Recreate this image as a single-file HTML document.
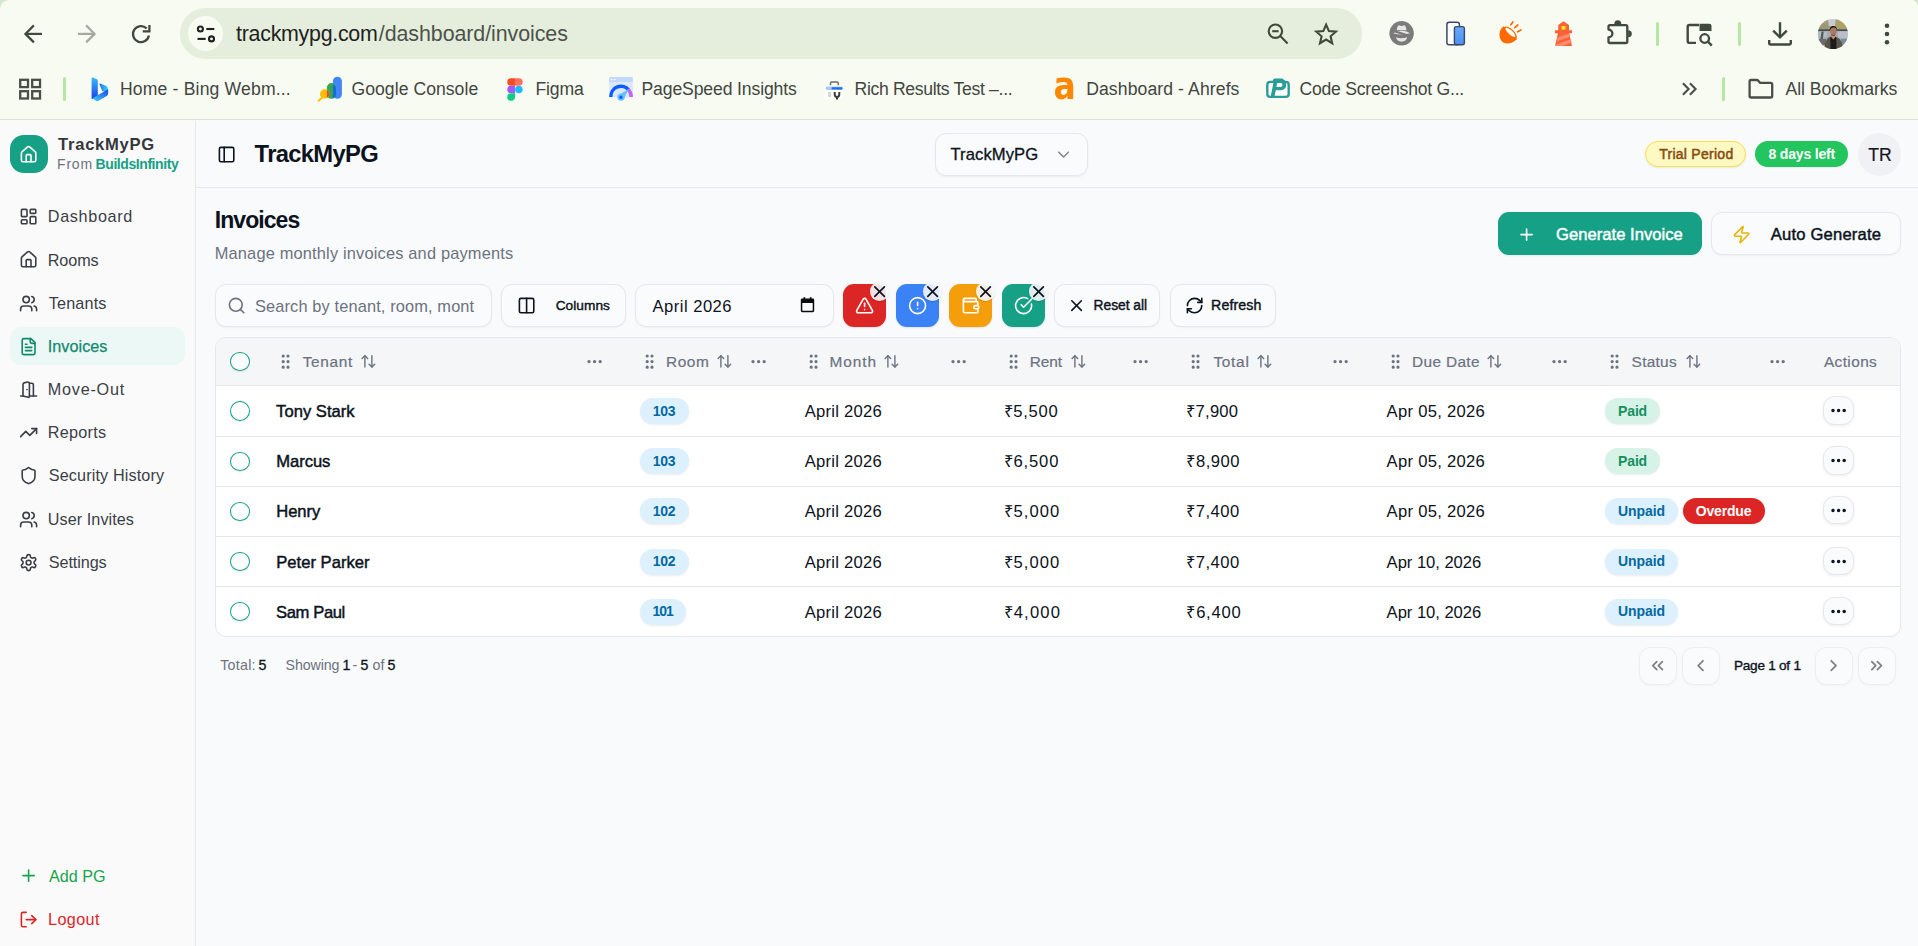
<!DOCTYPE html>
<html lang="en">
<head>
<meta charset="utf-8">
<title>Invoices - TrackMyPG</title>
<style>

*{box-sizing:border-box;margin:0;padding:0}
html,body{width:1918px;height:946px;overflow:hidden;background:#f9fafb}
body{font-family:"Liberation Sans",sans-serif}
#app{position:relative;width:1918px;height:946px;overflow:hidden;background:#f9fafb}
.b,.t,.i{position:absolute;display:block}
.t{white-space:nowrap}

</style>
</head>
<body>
<div id="app">
<!-- browser chrome -->
<div class="b" style="left:0px;top:0px;width:1918px;height:121px;background:#f8fbf2;"></div>
<div class="b" style="left:0px;top:119px;width:1918px;height:1px;background:#dee3d7;"></div>
<svg class="i" style="left:0px;top:0px" width="12" height="12" viewBox="0 0 12 12" ><path d="M0 0H8.500A9.500 9.500 0 0 0 0 9.500z" fill="#d6e7cd"/></svg>
<svg class="i" style="left:1906px;top:0px" width="12" height="12" viewBox="1906 0 12 12" ><path d="M1918 0H1911.500A7 7 0 0 1 1918 6.500z" fill="#d6e7cd"/></svg>
<svg class="i" style="left:20px;top:20px" width="28" height="28" viewBox="20 20 28 28" ><g fill="none" stroke="#3f4a3c" stroke-width="2.2"><path d="M42 33.9H26.2"/><path d="M33.9 25.4 25.400 33.900 33.900 42.400"/></g></svg>
<svg class="i" style="left:74px;top:20px" width="28" height="28" viewBox="74 20 28 28" ><g fill="none" stroke="#a4a9a1" stroke-width="2.2"><path d="M78 33.9H93.800"/><path d="M86.100 25.400 94.600 33.900 86.100 42.400"/></g></svg>
<svg class="i" style="left:128px;top:20px" width="28" height="28" viewBox="128 20 28 28" ><g fill="none" stroke="#3f4a3c" stroke-width="2.3"><path d="M146.7 28.500A8 8 0 1 0 148.900 35.500"/><path d="M149.400 24.900V31.400H142.700"/></g></svg>
<div class="b" style="left:180px;top:8px;width:1182px;height:50.5px;background:#e5eddc;border-radius:25.25px;"></div>
<div class="b" style="left:187.6px;top:15.7px;width:35.599999999999994px;height:35.599999999999994px;background:#f8fbf2;border-radius:18px;"></div>
<svg class="i" style="left:194px;top:22px" width="24" height="24" viewBox="194 22 24 24" ><g fill="none" stroke="#1f231e" stroke-width="2.1"><circle cx="200.400" cy="29" r="2.500"/><path d="M206.300 29h8"/><circle cx="211.500" cy="38.900" r="2.500"/><path d="M197.500 38.900h8.200"/></g></svg>
<span class="t" style="left:236.10px;top:21px;height:27px;line-height:27px;font-size:21.4px;color:#1f231e;letter-spacing:-0.275px;">trackmypg.com</span><span class="t" style="left:378.80px;top:21px;height:27px;line-height:27px;font-size:21.4px;color:#4c524a;letter-spacing:-0.065px;">/dashboard/invoices</span>
<svg class="i" style="left:1264px;top:20px" width="28" height="28" viewBox="1264 20 28 28" ><g fill="none" stroke="#3f4a3c" stroke-width="2.1"><circle cx="1275.400" cy="31.200" r="6.700"/><path d="M1280.300 36.100 1287.600 43.400"/><path d="M1272.200 31.200h6.400"/></g></svg>
<svg class="i" style="left:1312px;top:20px" width="28" height="28" viewBox="1312 20 28 28" ><path d="M1326.100 24.600 1328.900 31.100 1335.900 31.700 1330.600 36.300 1332.200 43.200 1326.100 39.500 1320 43.200 1321.600 36.300 1316.300 31.700 1323.300 31.100z" fill="none" stroke="#3f4a3c" stroke-width="2.1" stroke-linejoin="miter"/></svg>
<svg class="i" style="left:1388px;top:20px" width="28" height="28" viewBox="1388 20 28 28" ><circle cx="1401.600" cy="33.300" r="12.200" fill="#7b7b7b"/><g fill="#e6e6e6"><path d="M1396.700 30.200c.4-3.600 1.500-5 2.400-5 .8 0 1.500.8 2.500.8s1.700-.8 2.500-.8c.9 0 2 1.400 2.400 5z"/><path d="M1393.200 33.200c2.800-1.700 6-2.400 8.400-2.400s5.600.7 8.400 2.400c-2.800.9-5.600 1.300-8.400 1.300s-5.600-.4-8.400-1.300z"/><path d="M1396 37.300c.3 2.600 2.700 4.400 5.600 4.400s5.300-1.800 5.600-4.400c-1.700.7-3.600 1-5.600 1s-3.900-.3-5.600-1z"/></g><path d="M1394.200 31.200 1409.600 36" stroke="#7b7b7b" stroke-width="2.300"/></svg>
<svg class="i" style="left:1444px;top:20px" width="24" height="28" viewBox="1444 20 24 28" ><defs><linearGradient id="dv" x1="0" y1="0" x2="0" y2="1"><stop offset="0" stop-color="#6aa9fb"/><stop offset="1" stop-color="#4b8ff2"/></linearGradient></defs><rect x="1446.900" y="22.300" width="12.500" height="22.500" rx="2.300" fill="#fff" stroke="#3b4869" stroke-width="1.500"/><rect x="1454.400" y="26.600" width="10" height="18.200" rx="2" fill="url(#dv)" stroke="#3b4869" stroke-width="1.400"/></svg>
<svg class="i" style="left:1496px;top:18px" width="30" height="30" viewBox="1496 18 30 30" ><path d="M1503.400 26.300C1499.200 29.600 1498.300 36.200 1501.200 40.400 1504 44.500 1510.800 44.800 1517.200 38.900z" fill="#ff6a00"/><ellipse cx="1510.300" cy="32.700" rx="8.300" ry="3.700" transform="rotate(43 1510.300 32.700)" fill="#ff6a00"/><ellipse cx="1510.400" cy="32.400" rx="6.500" ry="2.100" transform="rotate(43 1510.400 32.400)" fill="#f8fbf2"/><g stroke="#ff6a00" stroke-width="1.700" stroke-linecap="round"><path d="M1510.800 24.800 1512.900 21.900"/><path d="M1514.700 27.600 1517.800 25"/><path d="M1517.700 31.800 1520.900 29.900"/></g></svg>
<svg class="i" style="left:1552px;top:19px" width="23" height="29" viewBox="1552 19 23 29" ><path d="M1563.500 21.300 1569 25V30.200h3V33.300H1569.100L1572 46H1555L1557.900 33.300H1555V30.200h3.200V25z" fill="#ff6136"/><rect x="1561.500" y="26" width="4" height="3.600" fill="#ffe91f"/><path d="M1557.400 37.500 1569.600 33.400 1570.300 36.600 1556.500 41.400zM1555.700 44.500 1571 39.300l.7 3.100-9.500 3.600H1555.300z" fill="#ff8c6e"/></svg>
<svg class="i" style="left:1604px;top:18px" width="32" height="30" viewBox="1604 18 32 30" ><path d="M1608.500 26.600a1.500 1.500 0 0 1 1.500-1.500h15.800a1.500 1.500 0 0 1 1.500 1.500V41.500a1.500 1.500 0 0 1-1.500 1.500H1610a1.500 1.500 0 0 1-1.500-1.500V37.400a3.900 3.900 0 0 0 0-7.800z" fill="none" stroke="#3f4a3c" stroke-width="2.300" stroke-linejoin="round"/><path d="M1614.300 24.300a3.500 4 0 0 1 7 0z" fill="#3f4a3c"/><path d="M1628.200 30.300a3.600 3.500 0 0 1 0 7z" fill="#3f4a3c"/></svg>
<div class="b" style="left:1656px;top:21.5px;width:3px;height:24.0px;background:#b3e8a0;border-radius:1.5px;"></div>
<svg class="i" style="left:1684px;top:20px" width="32" height="28" viewBox="1684 20 32 28" ><path d="M1699 25H1689.300A1.600 1.600 0 0 0 1687.700 26.600V41.300A1.600 1.600 0 0 0 1689.300 42.900H1696" fill="none" stroke="#3f4a3c" stroke-width="2.400"/><path d="M1699.500 23.800h9.700a2.300 2.300 0 0 1 2.300 2.300V31H1699.500z" fill="#3f4a3c"/><circle cx="1704.700" cy="38.500" r="4.300" fill="none" stroke="#3f4a3c" stroke-width="2.300"/><path d="M1707.900 41.700 1711.800 45.600" stroke="#3f4a3c" stroke-width="2.400"/></svg>
<div class="b" style="left:1737.5px;top:21.5px;width:3.0px;height:24.0px;background:#b3e8a0;border-radius:1.5px;"></div>
<svg class="i" style="left:1766px;top:20px" width="28" height="28" viewBox="1766 20 28 28" ><g fill="none" stroke="#3f4a3c" stroke-width="2.400"><path d="M1780 22.200V37"/><path d="M1773.200 30.600 1780 37.400 1786.800 30.600"/><path d="M1769.200 40v3a1.500 1.500 0 0 0 1.500 1.500h18.600a1.500 1.500 0 0 0 1.500-1.500v-3" stroke-linejoin="round"/></g></svg>
<svg class="i" style="left:1816px;top:17px" width="34" height="34" viewBox="1816 17 34 34" ><defs><clipPath id="av"><circle cx="1832.900" cy="34" r="15.100"/></clipPath><filter id="avb" x="-10%" y="-10%" width="120%" height="120%"><feGaussianBlur stdDeviation=".55"/></filter></defs><g clip-path="url(#av)"><g filter="url(#avb)"><rect x="1816" y="17" width="34" height="34" fill="#a4a9b6"/><rect x="1816" y="17" width="34" height="13.500" fill="#a39d78"/><path d="M1827.500 17h8.500l-1 9h-6z" fill="#c6cbd6"/><path d="M1836.500 20.500h8l3 8h-11z" fill="#aca264"/><path d="M1818 24h10v7h-10z" fill="#9a9678"/><rect x="1816" y="29.300" width="34" height="1.700" fill="#4b4e4b"/><rect x="1838" y="31.500" width="12" height="6.500" fill="#b9bdc9"/><rect x="1818" y="32" width="9" height="5" fill="#b4b9c4"/><path d="M1821.500 31.500h2.200l-1.500 14h-2.600z" fill="#4d5f62"/><rect x="1817" y="39" width="9" height="6" fill="#6f6a66"/><rect x="1841" y="39" width="9" height="5.500" fill="#7d8a99"/><path d="M1824.600 51c0-7.500 1.200-12 4.600-13.800l3.800-1.400 4 1.400c3.800 1.800 6 6.300 6 13.800z" fill="#58574a"/><path d="M1830.600 51 1830.200 37.600 1833 36.200 1836.200 37.600 1836.600 51z" fill="#1d1b1c"/><path d="M1831.300 35h4l-.3 2.600-1.700 1.800-1.700-1.800z" fill="#c98a63"/><ellipse cx="1833.300" cy="31" rx="3.200" ry="4.100" fill="#a97a60"/><path d="M1829.800 30.400c-.8-5.600 7.400-6 7.200-.6-.9-1.700-2-2.300-3.500-2.300s-2.900.9-3.700 2.900z" fill="#1a1715"/><path d="M1831.200 33.900c1 1.500 3.200 1.500 4.200 0l-.4 1.600h-3.400z" fill="#3a2a24"/></g></g></svg>
<svg class="i" style="left:1882px;top:20px" width="10" height="28" viewBox="1882 20 10 28" ><g fill="#3f4a3c"><circle cx="1887" cy="25.800" r="2.300"/><circle cx="1887" cy="34" r="2.300"/><circle cx="1887" cy="42.200" r="2.300"/></g></svg>
<svg class="i" style="left:17px;top:76px" width="26" height="26" viewBox="17 76 26 26" ><g fill="none" stroke="#4a4e48" stroke-width="2.300"><rect x="20.200" y="79.800" width="7.800" height="7.300"/><rect x="32.200" y="79.800" width="7.800" height="7.300"/><rect x="20.200" y="91.200" width="7.800" height="7.300"/><rect x="32.200" y="91.200" width="7.800" height="7.300"/></g></svg>
<div class="b" style="left:63px;top:77px;width:3px;height:24px;background:#b3e8a0;border-radius:1.5px;"></div>
<svg class="i" style="left:89px;top:75px" width="22" height="28" viewBox="89 75 22 28" ><defs><linearGradient id="bg1" x1="0" y1="0" x2="0" y2="1"><stop offset="0" stop-color="#37bdf9"/><stop offset="1" stop-color="#1a3fe6"/></linearGradient><linearGradient id="bg2" x1="0" y1="0" x2="1" y2="0"><stop offset="0" stop-color="#2b6bf0"/><stop offset="1" stop-color="#2fe0f4"/></linearGradient><linearGradient id="bg3" x1="0" y1="1" x2="1" y2="0"><stop offset="0" stop-color="#35d3f6"/><stop offset="1" stop-color="#2246e8"/></linearGradient></defs><path d="M91.600 78.300c0-.7.600-1.100 1.200-.8L97 79.300c.5.200.8.700.8 1.200V96.200L93 98.900c-.7.400-1.400-.1-1.400-.8z" fill="url(#bg1)"/><path d="M99.500 84.600c-.3-.7.300-1.300 1-1l5.800 2.500c1.100.5 1.800 1.600 1.800 2.800v4.300L102.200 91z" fill="url(#bg2)"/><path d="M92.400 98.300 108.100 89.200v4.400c0 1-.5 1.900-1.400 2.400L98.400 100.800c-.8.500-1.800.5-2.600 0z" fill="url(#bg3)"/></svg>
<span class="t" style="left:120.00px;top:78px;height:22px;line-height:22px;font-size:17.6px;color:#42463f;letter-spacing:0.158px;">Home - Bing Webm...</span>
<svg class="i" style="left:316px;top:75px" width="28" height="28" viewBox="316 75 28 28" ><rect x="332.900" y="76.800" width="9" height="21.900" rx="4.500" fill="#4285f4"/><path d="M326.900 87.600a4.500 4.500 0 0 1 9 0V94.200a4.500 4.500 0 0 1-9 0z" fill="#34a853"/><path d="M332.900 84.400A4.500 4.500 0 0 1 336 87.600V94.200A4.500 4.500 0 0 1 332.900 98.400z" fill="#1a6ad6"/><path d="M321.700 98.100 318.600 100.700" stroke="#fbbc04" stroke-width="2" stroke-linecap="round"/><circle cx="324.700" cy="94" r="4.700" fill="#fbbc04"/><path d="M326.900 89.900A4.700 4.700 0 0 1 326.900 98.100z" fill="#ea4335"/></svg>
<span class="t" style="left:351.50px;top:78px;height:22px;line-height:22px;font-size:17.6px;color:#42463f;letter-spacing:0.039px;">Google Console</span>
<svg class="i" style="left:506px;top:77px" width="18" height="25" viewBox="506 77 18 25" ><path d="M507.300 81.950a3.750 3.750 0 0 1 3.750-3.750H515v7.500h-3.950a3.750 3.750 0 0 1-3.750-3.750z" fill="#f24e1e"/><path d="M515 78.200h3.950a3.750 3.750 0 0 1 0 7.500H515z" fill="#ff7262"/><path d="M507.300 89.450a3.750 3.750 0 0 1 3.750-3.750H515v7.500h-3.950a3.750 3.750 0 0 1-3.750-3.750z" fill="#a259ff"/><circle cx="518.900" cy="89.450" r="3.750" fill="#1abcfe"/><path d="M507.300 96.950a3.750 3.750 0 0 1 3.750-3.750H515v3.750a3.850 3.750 0 0 1-7.700 0z" fill="#0acf83"/></svg>
<span class="t" style="left:535.50px;top:78px;height:22px;line-height:22px;font-size:17.6px;color:#42463f;letter-spacing:-0.149px;">Figma</span>
<svg class="i" style="left:608px;top:76px" width="26" height="26" viewBox="608 76 26 26" ><rect x="609.100" y="76.900" width="23.900" height="20.500" rx="1.600" fill="#dce8fd"/><path d="M609.100 78.500a1.600 1.600 0 0 1 1.600-1.600h20.700a1.600 1.600 0 0 1 1.600 1.600V82H609.100z" fill="#c3d9fc"/><circle cx="611.700" cy="79.500" r=".8" fill="#fff"/><circle cx="614.800" cy="79.500" r=".8" fill="#fff"/><path d="M610.800 97A10.200 10.200 0 0 1 629 90.200" fill="none" stroke="#0b5cff" stroke-width="3.400"/><path d="M628 89.200A10.200 10.200 0 0 1 631.200 97" fill="none" stroke="#c065fb" stroke-width="3.400"/><path d="M618.400 95.500 628.400 89 623.800 99.600z" fill="#63c2ff"/><circle cx="621" cy="97.200" r="3.600" fill="#63c2ff"/><circle cx="621" cy="97.200" r="1.600" fill="#0b5cff"/></svg>
<span class="t" style="left:641.50px;top:78px;height:22px;line-height:22px;font-size:17.6px;color:#42463f;letter-spacing:-0.129px;">PageSpeed Insights</span>
<svg class="i" style="left:823px;top:79px" width="23" height="22" viewBox="823 79 23 22" ><path d="M830.500 85.500V83.400A1.300 1.300 0 0 1 831.800 82.100h5.200A1.300 1.300 0 0 1 838.300 83.400V85.500" fill="none" stroke="#6d6f6c" stroke-width="1.500"/><rect x="825.500" y="85.400" width="17.600" height="13.400" rx="1.200" fill="#fff"/><rect x="825.800" y="86.500" width="17" height="3.400" rx="1.200" fill="#a9c7fa"/><rect x="831.500" y="87.200" width="11" height="2.200" rx="1" fill="#1a73e8"/><rect x="828.200" y="92" width="2.800" height="5" fill="#d4d6d3"/><path d="M834.700 92v2.300a2.300 2.600 0 0 0 4.600 0V92M837 96v3.400" fill="none" stroke="#3a3d3a" stroke-width="2"/></svg>
<span class="t" style="left:854.50px;top:78px;height:22px;line-height:22px;font-size:17.6px;color:#42463f;letter-spacing:-0.326px;">Rich Results Test –...</span>
<span class="t" style="left:1054.20px;top:68px;height:39px;line-height:39px;font-size:31.5px;color:#ff8800;font-weight:700;font-family:'DejaVu Sans','Liberation Sans',sans-serif;transform:scale(1.05,1.22);transform-origin:45% 62%;">a</span>
<span class="t" style="left:1086.20px;top:78px;height:22px;line-height:22px;font-size:17.6px;color:#42463f;letter-spacing:0.097px;">Dashboard - Ahrefs</span>
<svg class="i" style="left:1264px;top:77px" width="28" height="23" viewBox="1264 77 28 23" ><path d="M1273.200 81 1274 79h8.500l2.200 2z" fill="#2a9d99" stroke="#2a9d99" stroke-width="1" stroke-linejoin="round"/><rect x="1267.300" y="81.900" width="21.400" height="15" rx="2.800" fill="#fff" stroke="#2a9d99" stroke-width="2.400"/><path d="M1270.600 97 1274 79.700h7.500c6.400 0 6.400 10.500-.4 10.500h-5.300l-1.400 6.800z" fill="#2a9d99"/><path d="M1277.200 83h3.600c2.200 0 2.200 3.900-.2 3.900h-4.200z" fill="#fff"/></svg>
<span class="t" style="left:1299.50px;top:78px;height:22px;line-height:22px;font-size:17.6px;color:#42463f;letter-spacing:-0.237px;">Code Screenshot G...</span>
<svg class="i" style="left:1679px;top:80px" width="20" height="18" viewBox="1679 80 20 18" ><g fill="none" stroke="#4a4e48" stroke-width="2.100"><path d="M1682.900 83.300 1688.600 89 1682.900 94.700"/><path d="M1689.900 83.300 1695.600 89 1689.900 94.700"/></g></svg>
<div class="b" style="left:1722px;top:77px;width:3px;height:24px;background:#b3e8a0;border-radius:1.5px;"></div>
<svg class="i" style="left:1746px;top:76px" width="30" height="26" viewBox="1746 76 30 26" ><path d="M1749.600 81.500a1.500 1.500 0 0 1 1.500-1.500h6.400l2.700 2.900h10.500a1.500 1.500 0 0 1 1.500 1.500V96a1.500 1.500 0 0 1-1.500 1.500H1751.100a1.500 1.500 0 0 1-1.500-1.500z" fill="none" stroke="#4a4e48" stroke-width="2.300" stroke-linejoin="round"/></svg>
<span class="t" style="left:1785.50px;top:78px;height:22px;line-height:22px;font-size:17.6px;color:#42463f;letter-spacing:-0.053px;">All Bookmarks</span>
<!-- sidebar -->
<div class="b" style="left:0px;top:121px;width:196px;height:825px;background:#fafafa;border-right:1px solid #e5e7eb;"></div>
<div class="b" style="left:10px;top:135px;width:38px;height:38px;background:#16a085;border-radius:14px;"></div>
<svg class="i" style="left:19.10px;top:144.70px" width="19.2" height="19.2" viewBox="0 0 24 24" fill="none" stroke="#fff" stroke-width="2" stroke-linecap="round" stroke-linejoin="round"><path d="M15 21v-8a1 1 0 0 0-1-1h-4a1 1 0 0 0-1 1v8"/><path d="M3 10a2 2 0 0 1 .709-1.528l7-5.999a2 2 0 0 1 2.582 0l7 5.999A2 2 0 0 1 21 10v9a2 2 0 0 1-2 2H5a2 2 0 0 1-2-2z"/></svg>
<span class="t" style="left:58.10px;top:134px;height:21px;line-height:21px;font-size:16.6px;color:#34373c;font-weight:700;letter-spacing:0.715px;">TrackMyPG</span>
<span class="t" style="left:57.10px;top:155px;height:18px;line-height:18px;font-size:14px;color:#6b7280;letter-spacing:0.767px;">From</span>
<span class="t" style="left:95.60px;top:155px;height:18px;line-height:18px;font-size:14px;color:#16a085;font-weight:700;letter-spacing:-0.429px;">BuildsInfinity</span>
<svg class="i" style="left:19.20px;top:207.00px" width="19.2" height="19.2" viewBox="0 0 24 24" fill="none" stroke="#3a3f47" stroke-width="2" stroke-linecap="round" stroke-linejoin="round"><rect width="7" height="9" x="3" y="3" rx="1"/><rect width="7" height="5" x="14" y="3" rx="1"/><rect width="7" height="9" x="14" y="12" rx="1"/><rect width="7" height="5" x="3" y="16" rx="1"/></svg>
<span class="t" style="left:47.80px;top:206px;height:20px;line-height:20px;font-size:16.2px;color:#3a3f47;letter-spacing:0.664px;">Dashboard</span>
<svg class="i" style="left:19.20px;top:250.25px" width="19.2" height="19.2" viewBox="0 0 24 24" fill="none" stroke="#3a3f47" stroke-width="2" stroke-linecap="round" stroke-linejoin="round"><path d="M15 21v-8a1 1 0 0 0-1-1h-4a1 1 0 0 0-1 1v8"/><path d="M3 10a2 2 0 0 1 .709-1.528l7-5.999a2 2 0 0 1 2.582 0l7 5.999A2 2 0 0 1 21 10v9a2 2 0 0 1-2 2H5a2 2 0 0 1-2-2z"/></svg>
<span class="t" style="left:47.80px;top:250px;height:20px;line-height:20px;font-size:16.2px;color:#3a3f47;letter-spacing:-0.120px;">Rooms</span>
<svg class="i" style="left:19.20px;top:293.50px" width="19.2" height="19.2" viewBox="0 0 24 24" fill="none" stroke="#3a3f47" stroke-width="2" stroke-linecap="round" stroke-linejoin="round"><path d="M16 21v-2a4 4 0 0 0-4-4H6a4 4 0 0 0-4 4v2"/><circle cx="9" cy="7" r="4"/><path d="M22 21v-2a4 4 0 0 0-3-3.87"/><path d="M16 3.13a4 4 0 0 1 0 7.75"/></svg>
<span class="t" style="left:48.80px;top:293px;height:20px;line-height:20px;font-size:16.2px;color:#3a3f47;letter-spacing:0.150px;">Tenants</span>
<div class="b" style="left:10px;top:327px;width:175px;height:38px;background:#ecf8f5;border-radius:11px;"></div>
<svg class="i" style="left:19.20px;top:336.75px" width="19.2" height="19.2" viewBox="0 0 24 24" fill="none" stroke="#12896f" stroke-width="2" stroke-linecap="round" stroke-linejoin="round"><path d="M15 2H6a2 2 0 0 0-2 2v16a2 2 0 0 0 2 2h12a2 2 0 0 0 2-2V7Z"/><path d="M14 2v4a2 2 0 0 0 2 2h4"/><path d="M10 9H8"/><path d="M16 13H8"/><path d="M16 17H8"/></svg>
<span class="t" style="left:47.80px;top:336px;height:20px;line-height:20px;font-size:16.2px;color:#12896f;letter-spacing:0.030px;-webkit-text-stroke:0.25px #12896f;">Invoices</span>
<svg class="i" style="left:19.20px;top:380.00px" width="19.2" height="19.2" viewBox="0 0 24 24" fill="none" stroke="#3a3f47" stroke-width="2" stroke-linecap="round" stroke-linejoin="round"><path d="M13 4h3a2 2 0 0 1 2 2v14"/><path d="M2 20h3"/><path d="M13 20h9"/><path d="M10 12v.01"/><path d="M13 4.562v16.157a1 1 0 0 1-1.242.97L5 20V5.562a2 2 0 0 1 1.515-1.94l4-1A2 2 0 0 1 13 4.561Z"/></svg>
<span class="t" style="left:47.80px;top:379px;height:20px;line-height:20px;font-size:16.2px;color:#3a3f47;letter-spacing:0.762px;">Move-Out</span>
<svg class="i" style="left:19.20px;top:423.00px" width="19.2" height="19.2" viewBox="0 0 24 24" fill="none" stroke="#3a3f47" stroke-width="2" stroke-linecap="round" stroke-linejoin="round"><polyline points="22 7 13.5 15.5 8.5 10.5 2 17"/><polyline points="16 7 22 7 22 13"/></svg>
<span class="t" style="left:47.80px;top:422px;height:20px;line-height:20px;font-size:16.2px;color:#3a3f47;letter-spacing:0.269px;">Reports</span>
<svg class="i" style="left:19.20px;top:465.80px" width="19.2" height="19.2" viewBox="0 0 24 24" fill="none" stroke="#3a3f47" stroke-width="2" stroke-linecap="round" stroke-linejoin="round"><path d="M20 13c0 5-3.5 7.5-7.66 8.95a1 1 0 0 1-.67-.01C7.5 20.5 4 18 4 13V6a1 1 0 0 1 1-1c2 0 4.5-1.2 6.24-2.72a1.17 1.17 0 0 1 1.52 0C14.51 3.81 17 5 19 5a1 1 0 0 1 1 1z"/></svg>
<span class="t" style="left:48.80px;top:465px;height:20px;line-height:20px;font-size:16.2px;color:#3a3f47;letter-spacing:0.131px;">Security History</span>
<svg class="i" style="left:19.20px;top:509.50px" width="19.2" height="19.2" viewBox="0 0 24 24" fill="none" stroke="#3a3f47" stroke-width="2" stroke-linecap="round" stroke-linejoin="round"><path d="M16 21v-2a4 4 0 0 0-4-4H6a4 4 0 0 0-4 4v2"/><circle cx="9" cy="7" r="4"/><path d="M22 21v-2a4 4 0 0 0-3-3.87"/><path d="M16 3.13a4 4 0 0 1 0 7.75"/></svg>
<span class="t" style="left:47.80px;top:509px;height:20px;line-height:20px;font-size:16.2px;color:#3a3f47;letter-spacing:0.058px;">User Invites</span>
<svg class="i" style="left:19.20px;top:552.80px" width="19.2" height="19.2" viewBox="0 0 24 24" fill="none" stroke="#3a3f47" stroke-width="2" stroke-linecap="round" stroke-linejoin="round"><path d="M12.22 2h-.44a2 2 0 0 0-2 2v.18a2 2 0 0 1-1 1.73l-.43.25a2 2 0 0 1-2 0l-.15-.08a2 2 0 0 0-2.73.73l-.22.38a2 2 0 0 0 .73 2.73l.15.1a2 2 0 0 1 1 1.72v.51a2 2 0 0 1-1 1.74l-.15.09a2 2 0 0 0-.73 2.73l.22.38a2 2 0 0 0 2.73.73l.15-.08a2 2 0 0 1 2 0l.43.25a2 2 0 0 1 1 1.73V20a2 2 0 0 0 2 2h.44a2 2 0 0 0 2-2v-.18a2 2 0 0 1 1-1.73l.43-.25a2 2 0 0 1 2 0l.15.08a2 2 0 0 0 2.73-.73l.22-.39a2 2 0 0 0-.73-2.73l-.15-.08a2 2 0 0 1-1-1.74v-.5a2 2 0 0 1 1-1.74l.15-.09a2 2 0 0 0 .73-2.73l-.22-.38a2 2 0 0 0-2.73-.73l-.15.08a2 2 0 0 1-2 0l-.43-.25a2 2 0 0 1-1-1.73V4a2 2 0 0 0-2-2z"/><circle cx="12" cy="12" r="3"/></svg>
<span class="t" style="left:48.80px;top:552px;height:20px;line-height:20px;font-size:16.2px;color:#3a3f47;letter-spacing:-0.085px;">Settings</span>
<svg class="i" style="left:19.20px;top:866.40px" width="19.2" height="19.2" viewBox="0 0 24 24" fill="none" stroke="#16a34a" stroke-width="2" stroke-linecap="round" stroke-linejoin="round"><path d="M5 12h14"/><path d="M12 5v14"/></svg>
<span class="t" style="left:49.00px;top:866px;height:20px;line-height:20px;font-size:16.2px;color:#16a34a;letter-spacing:-0.019px;">Add PG</span>
<svg class="i" style="left:19.20px;top:910.20px" width="19.2" height="19.2" viewBox="0 0 24 24" fill="none" stroke="#dc2626" stroke-width="2" stroke-linecap="round" stroke-linejoin="round"><path d="M9 21H5a2 2 0 0 1-2-2V5a2 2 0 0 1 2-2h4"/><polyline points="16 17 21 12 16 7"/><line x1="21" x2="9" y1="12" y2="12"/></svg>
<span class="t" style="left:48.00px;top:909px;height:20px;line-height:20px;font-size:16.2px;color:#dc2626;letter-spacing:0.397px;">Logout</span>
<!-- header -->
<div class="b" style="left:196px;top:121px;width:1722px;height:67px;background:#f9fafb;border-bottom:1px solid #e5e7eb;"></div>
<svg class="i" style="left:217.20px;top:145.00px" width="19.2" height="19.2" viewBox="0 0 24 24" fill="none" stroke="#0b1220" stroke-width="2" stroke-linecap="round" stroke-linejoin="round"><rect width="18" height="18" x="3" y="3" rx="2"/><path d="M9 3v18"/></svg>
<span class="t" style="left:254.60px;top:139px;height:30px;line-height:30px;font-size:23.8px;color:#0b1220;font-weight:700;letter-spacing:-0.690px;">TrackMyPG</span>
<div class="b" style="left:935px;top:133px;width:153px;height:43px;background:#fafbfc;border:1px solid #e5e7eb;border-radius:11px;box-shadow:0 1px 2px rgba(0,0,0,.05);"></div>
<span class="t" style="left:950.50px;top:144px;height:21px;line-height:21px;font-size:16.6px;color:#0b1220;letter-spacing:0.081px;-webkit-text-stroke:0.3px #0b1220;">TrackMyPG</span>
<svg class="i" style="left:1053.90px;top:145.00px" width="19.2" height="19.2" viewBox="0 0 24 24" fill="none" stroke="#85888d" stroke-width="2" stroke-linecap="round" stroke-linejoin="round"><path d="m6 9 6 6 6-6"/></svg>
<div class="b" style="left:1645px;top:141px;width:101px;height:26px;background:#fef9c3;border:1px solid #fde047;border-radius:13px;box-shadow:0 1px 2px rgba(0,0,0,.08);"></div>
<span class="t" style="left:1659.20px;top:145px;height:18px;line-height:18px;font-size:14px;color:#854d0e;letter-spacing:0.266px;-webkit-text-stroke:0.5px #854d0e;">Trial Period</span>
<div class="b" style="left:1755px;top:141px;width:92.59999999999991px;height:26px;background:#22c55e;border-radius:13px;box-shadow:0 1px 2px rgba(0,0,0,.06);"></div>
<span class="t" style="left:1768.40px;top:145px;height:18px;line-height:18px;font-size:14px;color:#fff;font-weight:700;letter-spacing:-0.161px;">8 days left</span>
<div class="b" style="left:1858px;top:133px;width:43px;height:43px;background:#eff1f4;border-radius:22px;"></div>
<span class="t" style="left:1868.20px;top:144px;height:22px;line-height:22px;font-size:17.6px;color:#16181d;letter-spacing:0.053px;-webkit-text-stroke:0.2px #16181d;">TR</span>
<!-- main -->
<h1 class="t" style="left:214.70px;top:206px;height:29px;line-height:29px;font-size:23px;color:#0b1220;font-weight:700;letter-spacing:-0.922px;">Invoices</h1>
<span class="t" style="left:214.70px;top:243px;height:20px;line-height:20px;font-size:16.4px;color:#6b7280;letter-spacing:0.172px;">Manage monthly invoices and payments</span>
<div class="b" style="left:1498px;top:212px;width:204px;height:43px;background:#16a085;border-radius:11px;box-shadow:0 1px 2px rgba(0,0,0,.08);"></div>
<svg class="i" style="left:1517.20px;top:224.70px" width="19.2" height="19.2" viewBox="0 0 24 24" fill="none" stroke="#fff" stroke-width="2" stroke-linecap="round" stroke-linejoin="round"><path d="M5 12h14"/><path d="M12 5v14"/></svg>
<span class="t" style="left:1556.10px;top:224px;height:21px;line-height:21px;font-size:16.6px;color:#fff;letter-spacing:0.017px;-webkit-text-stroke:0.45px #fff;">Generate Invoice</span>
<div class="b" style="left:1711px;top:212px;width:190px;height:43px;background:#fafbfc;border:1px solid #e5e7eb;border-radius:11px;box-shadow:0 1px 2px rgba(0,0,0,.04);"></div>
<svg class="i" style="left:1732.20px;top:224.70px" width="19.2" height="19.2" viewBox="0 0 24 24" fill="none" stroke="#eab308" stroke-width="2" stroke-linecap="round" stroke-linejoin="round"><path d="M4 14a1 1 0 0 1-.78-1.63l9.9-10.2a.5.5 0 0 1 .86.46l-1.92 6.02A1 1 0 0 0 13 10h7a1 1 0 0 1 .78 1.63l-9.9 10.2a.5.5 0 0 1-.86-.46l1.92-6.02A1 1 0 0 0 11 14z"/></svg>
<span class="t" style="left:1770.70px;top:224px;height:21px;line-height:21px;font-size:16.6px;color:#0b1220;letter-spacing:0.200px;-webkit-text-stroke:0.45px #0b1220;">Auto Generate</span>
<div class="b" style="left:215px;top:284px;width:277px;height:43px;background:#fafbfc;border:1px solid #e5e7eb;border-radius:11px;box-shadow:0 1px 2px rgba(0,0,0,.04);"></div>
<svg class="i" style="left:227.20px;top:296.20px" width="19.2" height="19.2" viewBox="0 0 24 24" fill="none" stroke="#6b7280" stroke-width="2" stroke-linecap="round" stroke-linejoin="round"><circle cx="11" cy="11" r="8"/><path d="m21 21-4.3-4.3"/></svg>
<span class="t" style="left:255.00px;top:296px;height:20px;line-height:20px;font-size:16.4px;color:#6b7280;letter-spacing:0.120px;">Search by tenant, room, mont</span>
<div class="b" style="left:501px;top:284px;width:125px;height:43px;background:#fafbfc;border:1px solid #e5e7eb;border-radius:11px;box-shadow:0 1px 2px rgba(0,0,0,.04);"></div>
<svg class="i" style="left:516.80px;top:295.70px" width="19.2" height="19.2" viewBox="0 0 24 24" fill="none" stroke="#0b1220" stroke-width="2" stroke-linecap="round" stroke-linejoin="round"><rect width="18" height="18" x="3" y="3" rx="2"/><path d="M12 3v18"/></svg>
<span class="t" style="left:555.70px;top:297px;height:17px;line-height:17px;font-size:13.7px;color:#0b1220;letter-spacing:0.039px;-webkit-text-stroke:0.4px #0b1220;">Columns</span>
<div class="b" style="left:635px;top:284px;width:199px;height:43px;background:#fafbfc;border:1px solid #e5e7eb;border-radius:11px;box-shadow:0 1px 2px rgba(0,0,0,.04);"></div>
<span class="t" style="left:652.50px;top:296px;height:21px;line-height:21px;font-size:16.6px;color:#0b1220;letter-spacing:0.479px;">April 2026</span>
<svg class="i" style="left:799px;top:296px" width="17" height="18" viewBox="799 296 17 18" ><rect x="800.800" y="298.600" width="13.400" height="13.600" rx="1.400" fill="#0b0b0c"/><rect x="802.300" y="303" width="10.400" height="7.700" rx=".4" fill="#f9fafb"/><rect x="803.500" y="297.200" width="1.700" height="2.400" fill="#0b0b0c"/><rect x="809.800" y="297.200" width="1.700" height="2.400" fill="#0b0b0c"/></svg>
<div class="b" style="left:843px;top:284px;width:43px;height:43px;background:#dc2626;border-radius:11px;box-shadow:0 1px 2px rgba(0,0,0,.1);"></div>
<svg class="i" style="left:855.00px;top:296.00px" width="19.2" height="19.2" viewBox="0 0 24 24" fill="none" stroke="#fff" stroke-width="2" stroke-linecap="round" stroke-linejoin="round"><path d="m21.73 18-8-14a2 2 0 0 0-3.48 0l-8 14A2 2 0 0 0 4 21h16a2 2 0 0 0 1.73-3"/><path d="M12 9v4"/><path d="M12 17h.01"/></svg>
<div class="b" style="left:870.2px;top:282.3px;width:18.399999999999977px;height:18.399999999999977px;background:rgba(245,246,248,.9);border-radius:9.2px;box-shadow:0 1px 2px rgba(0,0,0,.12);"></div>
<svg class="i" style="left:869.80px;top:281.90px" width="19.2" height="19.2" viewBox="0 0 24 24" fill="none" stroke="#0b1220" stroke-width="2.1" stroke-linecap="round" stroke-linejoin="round"><path d="M18 6 6 18"/><path d="m6 6 12 12"/></svg>
<div class="b" style="left:896px;top:284px;width:43px;height:43px;background:#3b82f6;border-radius:11px;box-shadow:0 1px 2px rgba(0,0,0,.1);"></div>
<svg class="i" style="left:908.00px;top:296.00px" width="19.2" height="19.2" viewBox="0 0 24 24" fill="none" stroke="#fff" stroke-width="2" stroke-linecap="round" stroke-linejoin="round"><circle cx="12" cy="12" r="10"/><line x1="12" x2="12" y1="8" y2="12"/><line x1="12" x2="12.01" y1="16" y2="16"/></svg>
<div class="b" style="left:923.2px;top:282.3px;width:18.399999999999977px;height:18.399999999999977px;background:rgba(245,246,248,.9);border-radius:9.2px;box-shadow:0 1px 2px rgba(0,0,0,.12);"></div>
<svg class="i" style="left:922.80px;top:281.90px" width="19.2" height="19.2" viewBox="0 0 24 24" fill="none" stroke="#0b1220" stroke-width="2.1" stroke-linecap="round" stroke-linejoin="round"><path d="M18 6 6 18"/><path d="m6 6 12 12"/></svg>
<div class="b" style="left:949px;top:284px;width:43px;height:43px;background:#f59e0b;border-radius:11px;box-shadow:0 1px 2px rgba(0,0,0,.1);"></div>
<svg class="i" style="left:961.00px;top:296.00px" width="19.2" height="19.2" viewBox="0 0 24 24" fill="none" stroke="#fff" stroke-width="2" stroke-linecap="round" stroke-linejoin="round"><path d="M19 7V4a1 1 0 0 0-1-1H5a2 2 0 0 0 0 4h15a1 1 0 0 1 1 1v4h-3a2 2 0 0 0 0 4h3a1 1 0 0 0 1-1v-2a1 1 0 0 0-1-1"/><path d="M3 5v14a2 2 0 0 0 2 2h15a1 1 0 0 0 1-1v-4"/></svg>
<div class="b" style="left:976.2px;top:282.3px;width:18.399999999999977px;height:18.399999999999977px;background:rgba(245,246,248,.9);border-radius:9.2px;box-shadow:0 1px 2px rgba(0,0,0,.12);"></div>
<svg class="i" style="left:975.80px;top:281.90px" width="19.2" height="19.2" viewBox="0 0 24 24" fill="none" stroke="#0b1220" stroke-width="2.1" stroke-linecap="round" stroke-linejoin="round"><path d="M18 6 6 18"/><path d="m6 6 12 12"/></svg>
<div class="b" style="left:1002px;top:284px;width:43px;height:43px;background:#16a085;border-radius:11px;box-shadow:0 1px 2px rgba(0,0,0,.1);"></div>
<svg class="i" style="left:1014.00px;top:296.00px" width="19.2" height="19.2" viewBox="0 0 24 24" fill="none" stroke="#fff" stroke-width="2" stroke-linecap="round" stroke-linejoin="round"><path d="M21.801 10A10 10 0 1 1 17 3.335"/><path d="m9 11 3 3L22 4"/></svg>
<div class="b" style="left:1029.2px;top:282.3px;width:18.399999999999864px;height:18.399999999999977px;background:rgba(245,246,248,.9);border-radius:9.2px;box-shadow:0 1px 2px rgba(0,0,0,.12);"></div>
<svg class="i" style="left:1028.80px;top:281.90px" width="19.2" height="19.2" viewBox="0 0 24 24" fill="none" stroke="#0b1220" stroke-width="2.1" stroke-linecap="round" stroke-linejoin="round"><path d="M18 6 6 18"/><path d="m6 6 12 12"/></svg>
<div class="b" style="left:1054px;top:284px;width:106px;height:43px;background:#fafbfc;border:1px solid #e5e7eb;border-radius:11px;box-shadow:0 1px 2px rgba(0,0,0,.04);"></div>
<svg class="i" style="left:1067.00px;top:295.60px" width="19.2" height="19.2" viewBox="0 0 24 24" fill="none" stroke="#0b1220" stroke-width="2" stroke-linecap="round" stroke-linejoin="round"><path d="M18 6 6 18"/><path d="m6 6 12 12"/></svg>
<span class="t" style="left:1093.50px;top:297px;height:17px;line-height:17px;font-size:13.8px;color:#0b1220;-webkit-text-stroke:0.4px #0b1220;">Reset all</span>
<div class="b" style="left:1170px;top:284px;width:106px;height:43px;background:#fafbfc;border:1px solid #e5e7eb;border-radius:11px;box-shadow:0 1px 2px rgba(0,0,0,.04);"></div>
<svg class="i" style="left:1184.90px;top:295.60px" width="19.2" height="19.2" viewBox="0 0 24 24" fill="none" stroke="#0b1220" stroke-width="2" stroke-linecap="round" stroke-linejoin="round"><path d="M3 12a9 9 0 0 1 9-9 9.75 9.75 0 0 1 6.74 2.74L21 8"/><path d="M21 3v5h-5"/><path d="M21 12a9 9 0 0 1-9 9 9.75 9.75 0 0 1-6.74-2.74L3 16"/><path d="M8 16H3v5"/></svg>
<span class="t" style="left:1211.10px;top:296px;height:18px;line-height:18px;font-size:14.2px;color:#0b1220;letter-spacing:0.086px;-webkit-text-stroke:0.4px #0b1220;">Refresh</span>
<!-- table -->
<div class="b" style="left:215px;top:337px;width:1686px;height:300px;background:#fff;border:1px solid #e5e7eb;border-radius:11px;overflow:hidden;"><div class="b" style="left:0;top:0;width:1686px;height:48px;background:#f5f6f8;border-bottom:1px solid #e5e7eb"></div><div class="b" style="left:0;top:98px;width:1686px;height:1px;background:#e5e7eb"></div><div class="b" style="left:0;top:148px;width:1686px;height:1px;background:#e5e7eb"></div><div class="b" style="left:0;top:198px;width:1686px;height:1px;background:#e5e7eb"></div><div class="b" style="left:0;top:248px;width:1686px;height:1px;background:#e5e7eb"></div></div>
<div class="b" style="left:230px;top:352px;width:20px;height:19.4px;border-radius:50%;border:1.4px solid #16a085;background:#fff;box-shadow:0 1px 2px rgba(0,0,0,.1)"></div>
<svg class="i" style="left:276.20px;top:352.00px" width="19.2" height="19.2" viewBox="0 0 24 24" fill="none" stroke="#6b7280" stroke-width="2" stroke-linecap="round" stroke-linejoin="round"><circle cx="9" cy="12" r="1"/><circle cx="9" cy="5" r="1"/><circle cx="9" cy="19" r="1"/><circle cx="15" cy="12" r="1"/><circle cx="15" cy="5" r="1"/><circle cx="15" cy="19" r="1"/></svg>
<span class="t" style="left:302.70px;top:352px;height:19px;line-height:19px;font-size:15.4px;color:#6b7280;letter-spacing:0.674px;-webkit-text-stroke:0.2px #6b7280;">Tenant</span>
<svg class="i" style="left:360.10px;top:353.20px" width="16.8" height="16.8" viewBox="0 0 24 24" fill="none" stroke="#6b7280" stroke-width="2" stroke-linecap="round" stroke-linejoin="round"><path d="m21 16-4 4-4-4"/><path d="M17 20V4"/><path d="m3 8 4-4 4 4"/><path d="M7 4v16"/></svg>
<svg class="i" style="left:585.00px;top:352.00px" width="19.2" height="19.2" viewBox="0 0 24 24" fill="none" stroke="#6b7280" stroke-width="2.2" stroke-linecap="round" stroke-linejoin="round"><circle cx="12" cy="12" r="1"/><circle cx="19" cy="12" r="1"/><circle cx="5" cy="12" r="1"/></svg>
<svg class="i" style="left:640.20px;top:352.00px" width="19.2" height="19.2" viewBox="0 0 24 24" fill="none" stroke="#6b7280" stroke-width="2" stroke-linecap="round" stroke-linejoin="round"><circle cx="9" cy="12" r="1"/><circle cx="9" cy="5" r="1"/><circle cx="9" cy="19" r="1"/><circle cx="15" cy="12" r="1"/><circle cx="15" cy="5" r="1"/><circle cx="15" cy="19" r="1"/></svg>
<span class="t" style="left:665.90px;top:352px;height:19px;line-height:19px;font-size:15.4px;color:#6b7280;letter-spacing:0.622px;-webkit-text-stroke:0.2px #6b7280;">Room</span>
<svg class="i" style="left:715.50px;top:353.20px" width="16.8" height="16.8" viewBox="0 0 24 24" fill="none" stroke="#6b7280" stroke-width="2" stroke-linecap="round" stroke-linejoin="round"><path d="m21 16-4 4-4-4"/><path d="M17 20V4"/><path d="m3 8 4-4 4 4"/><path d="M7 4v16"/></svg>
<svg class="i" style="left:749.00px;top:352.00px" width="19.2" height="19.2" viewBox="0 0 24 24" fill="none" stroke="#6b7280" stroke-width="2.2" stroke-linecap="round" stroke-linejoin="round"><circle cx="12" cy="12" r="1"/><circle cx="19" cy="12" r="1"/><circle cx="5" cy="12" r="1"/></svg>
<svg class="i" style="left:803.80px;top:352.00px" width="19.2" height="19.2" viewBox="0 0 24 24" fill="none" stroke="#6b7280" stroke-width="2" stroke-linecap="round" stroke-linejoin="round"><circle cx="9" cy="12" r="1"/><circle cx="9" cy="5" r="1"/><circle cx="9" cy="19" r="1"/><circle cx="15" cy="12" r="1"/><circle cx="15" cy="5" r="1"/><circle cx="15" cy="19" r="1"/></svg>
<span class="t" style="left:829.50px;top:352px;height:19px;line-height:19px;font-size:15.4px;color:#6b7280;letter-spacing:0.971px;-webkit-text-stroke:0.2px #6b7280;">Month</span>
<svg class="i" style="left:883.00px;top:353.20px" width="16.8" height="16.8" viewBox="0 0 24 24" fill="none" stroke="#6b7280" stroke-width="2" stroke-linecap="round" stroke-linejoin="round"><path d="m21 16-4 4-4-4"/><path d="M17 20V4"/><path d="m3 8 4-4 4 4"/><path d="M7 4v16"/></svg>
<svg class="i" style="left:949.00px;top:352.00px" width="19.2" height="19.2" viewBox="0 0 24 24" fill="none" stroke="#6b7280" stroke-width="2.2" stroke-linecap="round" stroke-linejoin="round"><circle cx="12" cy="12" r="1"/><circle cx="19" cy="12" r="1"/><circle cx="5" cy="12" r="1"/></svg>
<svg class="i" style="left:1004.40px;top:352.00px" width="19.2" height="19.2" viewBox="0 0 24 24" fill="none" stroke="#6b7280" stroke-width="2" stroke-linecap="round" stroke-linejoin="round"><circle cx="9" cy="12" r="1"/><circle cx="9" cy="5" r="1"/><circle cx="9" cy="19" r="1"/><circle cx="15" cy="12" r="1"/><circle cx="15" cy="5" r="1"/><circle cx="15" cy="19" r="1"/></svg>
<span class="t" style="left:1029.70px;top:352px;height:19px;line-height:19px;font-size:15.4px;color:#6b7280;letter-spacing:-0.078px;-webkit-text-stroke:0.2px #6b7280;">Rent</span>
<svg class="i" style="left:1069.80px;top:353.20px" width="16.8" height="16.8" viewBox="0 0 24 24" fill="none" stroke="#6b7280" stroke-width="2" stroke-linecap="round" stroke-linejoin="round"><path d="m21 16-4 4-4-4"/><path d="M17 20V4"/><path d="m3 8 4-4 4 4"/><path d="M7 4v16"/></svg>
<svg class="i" style="left:1130.90px;top:352.00px" width="19.2" height="19.2" viewBox="0 0 24 24" fill="none" stroke="#6b7280" stroke-width="2.2" stroke-linecap="round" stroke-linejoin="round"><circle cx="12" cy="12" r="1"/><circle cx="19" cy="12" r="1"/><circle cx="5" cy="12" r="1"/></svg>
<svg class="i" style="left:1186.10px;top:352.00px" width="19.2" height="19.2" viewBox="0 0 24 24" fill="none" stroke="#6b7280" stroke-width="2" stroke-linecap="round" stroke-linejoin="round"><circle cx="9" cy="12" r="1"/><circle cx="9" cy="5" r="1"/><circle cx="9" cy="19" r="1"/><circle cx="15" cy="12" r="1"/><circle cx="15" cy="5" r="1"/><circle cx="15" cy="19" r="1"/></svg>
<span class="t" style="left:1213.40px;top:352px;height:19px;line-height:19px;font-size:15.4px;color:#6b7280;letter-spacing:0.728px;-webkit-text-stroke:0.2px #6b7280;">Total</span>
<svg class="i" style="left:1256.10px;top:353.20px" width="16.8" height="16.8" viewBox="0 0 24 24" fill="none" stroke="#6b7280" stroke-width="2" stroke-linecap="round" stroke-linejoin="round"><path d="m21 16-4 4-4-4"/><path d="M17 20V4"/><path d="m3 8 4-4 4 4"/><path d="M7 4v16"/></svg>
<svg class="i" style="left:1330.90px;top:352.00px" width="19.2" height="19.2" viewBox="0 0 24 24" fill="none" stroke="#6b7280" stroke-width="2.2" stroke-linecap="round" stroke-linejoin="round"><circle cx="12" cy="12" r="1"/><circle cx="19" cy="12" r="1"/><circle cx="5" cy="12" r="1"/></svg>
<svg class="i" style="left:1386.20px;top:352.00px" width="19.2" height="19.2" viewBox="0 0 24 24" fill="none" stroke="#6b7280" stroke-width="2" stroke-linecap="round" stroke-linejoin="round"><circle cx="9" cy="12" r="1"/><circle cx="9" cy="5" r="1"/><circle cx="9" cy="19" r="1"/><circle cx="15" cy="12" r="1"/><circle cx="15" cy="5" r="1"/><circle cx="15" cy="19" r="1"/></svg>
<span class="t" style="left:1412.10px;top:352px;height:19px;line-height:19px;font-size:15.4px;color:#6b7280;letter-spacing:0.334px;-webkit-text-stroke:0.2px #6b7280;">Due Date</span>
<svg class="i" style="left:1485.80px;top:353.20px" width="16.8" height="16.8" viewBox="0 0 24 24" fill="none" stroke="#6b7280" stroke-width="2" stroke-linecap="round" stroke-linejoin="round"><path d="m21 16-4 4-4-4"/><path d="M17 20V4"/><path d="m3 8 4-4 4 4"/><path d="M7 4v16"/></svg>
<svg class="i" style="left:1550.00px;top:352.00px" width="19.2" height="19.2" viewBox="0 0 24 24" fill="none" stroke="#6b7280" stroke-width="2.2" stroke-linecap="round" stroke-linejoin="round"><circle cx="12" cy="12" r="1"/><circle cx="19" cy="12" r="1"/><circle cx="5" cy="12" r="1"/></svg>
<svg class="i" style="left:1605.00px;top:352.00px" width="19.2" height="19.2" viewBox="0 0 24 24" fill="none" stroke="#6b7280" stroke-width="2" stroke-linecap="round" stroke-linejoin="round"><circle cx="9" cy="12" r="1"/><circle cx="9" cy="5" r="1"/><circle cx="9" cy="19" r="1"/><circle cx="15" cy="12" r="1"/><circle cx="15" cy="5" r="1"/><circle cx="15" cy="19" r="1"/></svg>
<span class="t" style="left:1631.60px;top:352px;height:19px;line-height:19px;font-size:15.4px;color:#6b7280;letter-spacing:0.273px;-webkit-text-stroke:0.2px #6b7280;">Status</span>
<svg class="i" style="left:1684.90px;top:353.20px" width="16.8" height="16.8" viewBox="0 0 24 24" fill="none" stroke="#6b7280" stroke-width="2" stroke-linecap="round" stroke-linejoin="round"><path d="m21 16-4 4-4-4"/><path d="M17 20V4"/><path d="m3 8 4-4 4 4"/><path d="M7 4v16"/></svg>
<svg class="i" style="left:1767.90px;top:352.00px" width="19.2" height="19.2" viewBox="0 0 24 24" fill="none" stroke="#6b7280" stroke-width="2.2" stroke-linecap="round" stroke-linejoin="round"><circle cx="12" cy="12" r="1"/><circle cx="19" cy="12" r="1"/><circle cx="5" cy="12" r="1"/></svg>
<span class="t" style="left:1823.90px;top:352px;height:19px;line-height:19px;font-size:15.4px;color:#6b7280;letter-spacing:0.404px;-webkit-text-stroke:0.2px #6b7280;">Actions</span>
<div class="b" style="left:230px;top:401px;width:20px;height:20.2px;border-radius:50%;border:1.4px solid #16a085;background:#fff;box-shadow:0 1px 2px rgba(0,0,0,.1)"></div>
<span class="t" style="left:276.10px;top:401px;height:21px;line-height:21px;font-size:16.6px;color:#0b1220;letter-spacing:0.012px;-webkit-text-stroke:0.45px #0b1220;">Tony Stark</span>
<div class="b" style="left:639.5px;top:398.2px;width:49.5px;height:26.0px;background:#dcf0fd;border-radius:13px;box-shadow:0 1px 2px rgba(0,0,0,.08);"></div>
<span class="t" style="left:652.80px;top:402px;height:18px;line-height:18px;font-size:14px;color:#0369a1;font-weight:700;letter-spacing:-0.286px;">103</span>
<span class="t" style="left:804.70px;top:401px;height:21px;line-height:21px;font-size:16.6px;color:#0b1220;letter-spacing:0.268px;">April 2026</span>
<span class="t" style="left:1003.50px;top:401px;height:21px;line-height:21px;font-size:16.6px;color:#0b1220;letter-spacing:0.721px;">₹5,500</span>
<span class="t" style="left:1186.40px;top:401px;height:21px;line-height:21px;font-size:16.6px;color:#0b1220;letter-spacing:0.221px;">₹7,900</span>
<span class="t" style="left:1386.60px;top:401px;height:21px;line-height:21px;font-size:16.6px;color:#0b1220;letter-spacing:0.282px;">Apr 05, 2026</span>
<div class="b" style="left:1604.8px;top:398.2px;width:55.5px;height:26.0px;background:#d7f2e6;border-radius:13px;box-shadow:0 1px 2px rgba(0,0,0,.08);"></div>
<span class="t" style="left:1618.10px;top:402px;height:18px;line-height:18px;font-size:14px;color:#15905f;font-weight:700;letter-spacing:-0.171px;">Paid</span>
<div class="b" style="left:1823px;top:396px;width:31px;height:29px;background:#fafbfc;border:1px solid #e5e7eb;border-radius:11.5px;box-shadow:0 1px 3px rgba(0,0,0,.07);"></div>
<svg class="i" style="left:1829.00px;top:400.80px" width="19.2" height="19.2" viewBox="0 0 24 24" fill="none" stroke="#0b1220" stroke-width="2.4" stroke-linecap="round" stroke-linejoin="round"><circle cx="12" cy="12" r="1"/><circle cx="19" cy="12" r="1"/><circle cx="5" cy="12" r="1"/></svg>
<div class="b" style="left:230px;top:452px;width:20px;height:19.4px;border-radius:50%;border:1.4px solid #16a085;background:#fff;box-shadow:0 1px 2px rgba(0,0,0,.1)"></div>
<span class="t" style="left:276.20px;top:451px;height:21px;line-height:21px;font-size:16.6px;color:#0b1220;letter-spacing:-0.041px;-webkit-text-stroke:0.45px #0b1220;">Marcus</span>
<div class="b" style="left:639.5px;top:448.3px;width:49.5px;height:26.0px;background:#dcf0fd;border-radius:13px;box-shadow:0 1px 2px rgba(0,0,0,.08);"></div>
<span class="t" style="left:652.80px;top:452px;height:18px;line-height:18px;font-size:14px;color:#0369a1;font-weight:700;letter-spacing:-0.286px;">103</span>
<span class="t" style="left:804.70px;top:451px;height:21px;line-height:21px;font-size:16.6px;color:#0b1220;letter-spacing:0.268px;">April 2026</span>
<span class="t" style="left:1003.50px;top:451px;height:21px;line-height:21px;font-size:16.6px;color:#0b1220;letter-spacing:0.881px;">₹6,500</span>
<span class="t" style="left:1186.40px;top:451px;height:21px;line-height:21px;font-size:16.6px;color:#0b1220;letter-spacing:0.521px;">₹8,900</span>
<span class="t" style="left:1386.60px;top:451px;height:21px;line-height:21px;font-size:16.6px;color:#0b1220;letter-spacing:0.282px;">Apr 05, 2026</span>
<div class="b" style="left:1604.8px;top:448.3px;width:55.5px;height:26.0px;background:#d7f2e6;border-radius:13px;box-shadow:0 1px 2px rgba(0,0,0,.08);"></div>
<span class="t" style="left:1618.10px;top:452px;height:18px;line-height:18px;font-size:14px;color:#15905f;font-weight:700;letter-spacing:-0.171px;">Paid</span>
<div class="b" style="left:1823px;top:446px;width:31px;height:29px;background:#fafbfc;border:1px solid #e5e7eb;border-radius:11.5px;box-shadow:0 1px 3px rgba(0,0,0,.07);"></div>
<svg class="i" style="left:1829.00px;top:450.80px" width="19.2" height="19.2" viewBox="0 0 24 24" fill="none" stroke="#0b1220" stroke-width="2.4" stroke-linecap="round" stroke-linejoin="round"><circle cx="12" cy="12" r="1"/><circle cx="19" cy="12" r="1"/><circle cx="5" cy="12" r="1"/></svg>
<div class="b" style="left:230px;top:502px;width:20px;height:19.4px;border-radius:50%;border:1.4px solid #16a085;background:#fff;box-shadow:0 1px 2px rgba(0,0,0,.1)"></div>
<span class="t" style="left:276.20px;top:501px;height:21px;line-height:21px;font-size:16.6px;color:#0b1220;letter-spacing:-0.042px;-webkit-text-stroke:0.45px #0b1220;">Henry</span>
<div class="b" style="left:639.5px;top:498.3px;width:49.5px;height:25.999999999999943px;background:#dcf0fd;border-radius:13px;box-shadow:0 1px 2px rgba(0,0,0,.08);"></div>
<span class="t" style="left:652.80px;top:502px;height:18px;line-height:18px;font-size:14px;color:#0369a1;font-weight:700;letter-spacing:-0.286px;">102</span>
<span class="t" style="left:804.70px;top:501px;height:21px;line-height:21px;font-size:16.6px;color:#0b1220;letter-spacing:0.268px;">April 2026</span>
<span class="t" style="left:1003.50px;top:501px;height:21px;line-height:21px;font-size:16.6px;color:#0b1220;letter-spacing:1.021px;">₹5,000</span>
<span class="t" style="left:1186.40px;top:501px;height:21px;line-height:21px;font-size:16.6px;color:#0b1220;letter-spacing:0.441px;">₹7,400</span>
<span class="t" style="left:1386.60px;top:501px;height:21px;line-height:21px;font-size:16.6px;color:#0b1220;letter-spacing:0.282px;">Apr 05, 2026</span>
<div class="b" style="left:1604.8px;top:498.3px;width:73.10000000000014px;height:25.999999999999943px;background:#dcf0fd;border-radius:13px;box-shadow:0 1px 2px rgba(0,0,0,.08);"></div>
<span class="t" style="left:1618.10px;top:502px;height:18px;line-height:18px;font-size:14px;color:#0369a1;font-weight:700;letter-spacing:-0.098px;">Unpaid</span>
<div class="b" style="left:1682.8px;top:498.3px;width:82.20000000000005px;height:25.999999999999943px;background:#dc2626;border-radius:13px;box-shadow:0 1px 2px rgba(0,0,0,.08);"></div>
<span class="t" style="left:1695.70px;top:502px;height:18px;line-height:18px;font-size:14px;color:#fff;font-weight:700;letter-spacing:-0.169px;">Overdue</span>
<div class="b" style="left:1823px;top:496px;width:31px;height:28.399999999999977px;background:#fafbfc;border:1px solid #e5e7eb;border-radius:11.5px;box-shadow:0 1px 3px rgba(0,0,0,.07);"></div>
<svg class="i" style="left:1829.00px;top:500.80px" width="19.2" height="19.2" viewBox="0 0 24 24" fill="none" stroke="#0b1220" stroke-width="2.4" stroke-linecap="round" stroke-linejoin="round"><circle cx="12" cy="12" r="1"/><circle cx="19" cy="12" r="1"/><circle cx="5" cy="12" r="1"/></svg>
<div class="b" style="left:230px;top:552px;width:20px;height:19.4px;border-radius:50%;border:1.4px solid #16a085;background:#fff;box-shadow:0 1px 2px rgba(0,0,0,.1)"></div>
<span class="t" style="left:276.20px;top:552px;height:21px;line-height:21px;font-size:16.6px;color:#0b1220;letter-spacing:0.025px;-webkit-text-stroke:0.45px #0b1220;">Peter Parker</span>
<div class="b" style="left:639.5px;top:548.6px;width:49.5px;height:26.0px;background:#dcf0fd;border-radius:13px;box-shadow:0 1px 2px rgba(0,0,0,.08);"></div>
<span class="t" style="left:652.80px;top:552px;height:18px;line-height:18px;font-size:14px;color:#0369a1;font-weight:700;letter-spacing:-0.286px;">102</span>
<span class="t" style="left:804.70px;top:552px;height:21px;line-height:21px;font-size:16.6px;color:#0b1220;letter-spacing:0.268px;">April 2026</span>
<span class="t" style="left:1003.50px;top:552px;height:21px;line-height:21px;font-size:16.6px;color:#0b1220;letter-spacing:1.021px;">₹5,000</span>
<span class="t" style="left:1186.40px;top:552px;height:21px;line-height:21px;font-size:16.6px;color:#0b1220;letter-spacing:0.441px;">₹7,400</span>
<span class="t" style="left:1386.60px;top:552px;height:21px;line-height:21px;font-size:16.6px;color:#0b1220;letter-spacing:-0.036px;">Apr 10, 2026</span>
<div class="b" style="left:1604.8px;top:548.6px;width:73.10000000000014px;height:26.0px;background:#dcf0fd;border-radius:13px;box-shadow:0 1px 2px rgba(0,0,0,.08);"></div>
<span class="t" style="left:1618.10px;top:552px;height:18px;line-height:18px;font-size:14px;color:#0369a1;font-weight:700;letter-spacing:-0.098px;">Unpaid</span>
<div class="b" style="left:1823px;top:547px;width:31px;height:28.399999999999977px;background:#fafbfc;border:1px solid #e5e7eb;border-radius:11.5px;box-shadow:0 1px 3px rgba(0,0,0,.07);"></div>
<svg class="i" style="left:1829.00px;top:551.80px" width="19.2" height="19.2" viewBox="0 0 24 24" fill="none" stroke="#0b1220" stroke-width="2.4" stroke-linecap="round" stroke-linejoin="round"><circle cx="12" cy="12" r="1"/><circle cx="19" cy="12" r="1"/><circle cx="5" cy="12" r="1"/></svg>
<div class="b" style="left:230px;top:602px;width:20px;height:19.4px;border-radius:50%;border:1.4px solid #16a085;background:#fff;box-shadow:0 1px 2px rgba(0,0,0,.1)"></div>
<span class="t" style="left:276.10px;top:602px;height:21px;line-height:21px;font-size:16.6px;color:#0b1220;letter-spacing:-0.394px;-webkit-text-stroke:0.45px #0b1220;">Sam Paul</span>
<div class="b" style="left:639.5px;top:598.7px;width:46.5px;height:26.0px;background:#dcf0fd;border-radius:13px;box-shadow:0 1px 2px rgba(0,0,0,.08);"></div>
<span class="t" style="left:652.40px;top:602px;height:18px;line-height:18px;font-size:14px;color:#0369a1;font-weight:700;letter-spacing:-0.986px;">101</span>
<span class="t" style="left:804.70px;top:602px;height:21px;line-height:21px;font-size:16.6px;color:#0b1220;letter-spacing:0.268px;">April 2026</span>
<span class="t" style="left:1003.50px;top:602px;height:21px;line-height:21px;font-size:16.6px;color:#0b1220;letter-spacing:1.181px;">₹4,000</span>
<span class="t" style="left:1186.40px;top:602px;height:21px;line-height:21px;font-size:16.6px;color:#0b1220;letter-spacing:0.741px;">₹6,400</span>
<span class="t" style="left:1386.60px;top:602px;height:21px;line-height:21px;font-size:16.6px;color:#0b1220;letter-spacing:-0.036px;">Apr 10, 2026</span>
<div class="b" style="left:1604.8px;top:598.7px;width:73.10000000000014px;height:26.0px;background:#dcf0fd;border-radius:13px;box-shadow:0 1px 2px rgba(0,0,0,.08);"></div>
<span class="t" style="left:1618.10px;top:602px;height:18px;line-height:18px;font-size:14px;color:#0369a1;font-weight:700;letter-spacing:-0.098px;">Unpaid</span>
<div class="b" style="left:1823px;top:597px;width:31px;height:28.399999999999977px;background:#fafbfc;border:1px solid #e5e7eb;border-radius:11.5px;box-shadow:0 1px 3px rgba(0,0,0,.07);"></div>
<svg class="i" style="left:1829.00px;top:601.80px" width="19.2" height="19.2" viewBox="0 0 24 24" fill="none" stroke="#0b1220" stroke-width="2.4" stroke-linecap="round" stroke-linejoin="round"><circle cx="12" cy="12" r="1"/><circle cx="19" cy="12" r="1"/><circle cx="5" cy="12" r="1"/></svg>
<span class="t" style="left:220.20px;top:656px;height:18px;line-height:18px;font-size:14.2px;color:#6b7280;letter-spacing:0.287px;">Total:</span>
<span class="t" style="left:258.60px;top:656px;height:18px;line-height:18px;font-size:14.2px;color:#0b1220;-webkit-text-stroke:0.3px #0b1220;">5</span>
<span class="t" style="left:285.60px;top:656px;height:18px;line-height:18px;font-size:14.2px;color:#6b7280;letter-spacing:-0.089px;">Showing</span>
<span class="t" style="left:342.40px;top:656px;height:18px;line-height:18px;font-size:14.2px;color:#0b1220;-webkit-text-stroke:0.3px #0b1220;">1</span>
<span class="t" style="left:352.60px;top:656px;height:18px;line-height:18px;font-size:14.2px;color:#6b7280;">-</span>
<span class="t" style="left:360.60px;top:656px;height:18px;line-height:18px;font-size:14.2px;color:#0b1220;-webkit-text-stroke:0.3px #0b1220;">5</span>
<span class="t" style="left:372.60px;top:656px;height:18px;line-height:18px;font-size:14.2px;color:#6b7280;letter-spacing:0.110px;">of</span>
<span class="t" style="left:387.60px;top:656px;height:18px;line-height:18px;font-size:14.2px;color:#0b1220;-webkit-text-stroke:0.3px #0b1220;">5</span>
<div class="b" style="left:1639px;top:647px;width:38px;height:37.5px;background:#fafbfc;border:1px solid #eceef1;border-radius:11.5px;box-shadow:0 1px 2px rgba(0,0,0,.03);"></div>
<svg class="i" style="left:1648.10px;top:656.20px" width="19.2" height="19.2" viewBox="0 0 24 24" fill="none" stroke="#7d8085" stroke-width="2.2" stroke-linecap="round" stroke-linejoin="round"><path d="m11 17-5-5 5-5"/><path d="m18 17-5-5 5-5"/></svg>
<div class="b" style="left:1682px;top:647px;width:38px;height:37.5px;background:#fafbfc;border:1px solid #eceef1;border-radius:11.5px;box-shadow:0 1px 2px rgba(0,0,0,.03);"></div>
<svg class="i" style="left:1691.10px;top:656.20px" width="19.2" height="19.2" viewBox="0 0 24 24" fill="none" stroke="#7d8085" stroke-width="2.2" stroke-linecap="round" stroke-linejoin="round"><path d="m15 18-6-6 6-6"/></svg>
<div class="b" style="left:1814.5px;top:647px;width:38.0px;height:37.5px;background:#fafbfc;border:1px solid #eceef1;border-radius:11.5px;box-shadow:0 1px 2px rgba(0,0,0,.03);"></div>
<svg class="i" style="left:1823.60px;top:656.20px" width="19.2" height="19.2" viewBox="0 0 24 24" fill="none" stroke="#7d8085" stroke-width="2.2" stroke-linecap="round" stroke-linejoin="round"><path d="m9 18 6-6-6-6"/></svg>
<div class="b" style="left:1858px;top:647px;width:38px;height:37.5px;background:#fafbfc;border:1px solid #eceef1;border-radius:11.5px;box-shadow:0 1px 2px rgba(0,0,0,.03);"></div>
<svg class="i" style="left:1867.10px;top:656.20px" width="19.2" height="19.2" viewBox="0 0 24 24" fill="none" stroke="#7d8085" stroke-width="2.2" stroke-linecap="round" stroke-linejoin="round"><path d="m6 17 5-5-5-5"/><path d="m13 17 5-5-5-5"/></svg>
<span class="t" style="left:1734.00px;top:657px;height:17px;line-height:17px;font-size:13.6px;color:#0b1220;letter-spacing:-0.258px;-webkit-text-stroke:0.35px #0b1220;">Page 1 of 1</span>
</div>
</body>
</html>
